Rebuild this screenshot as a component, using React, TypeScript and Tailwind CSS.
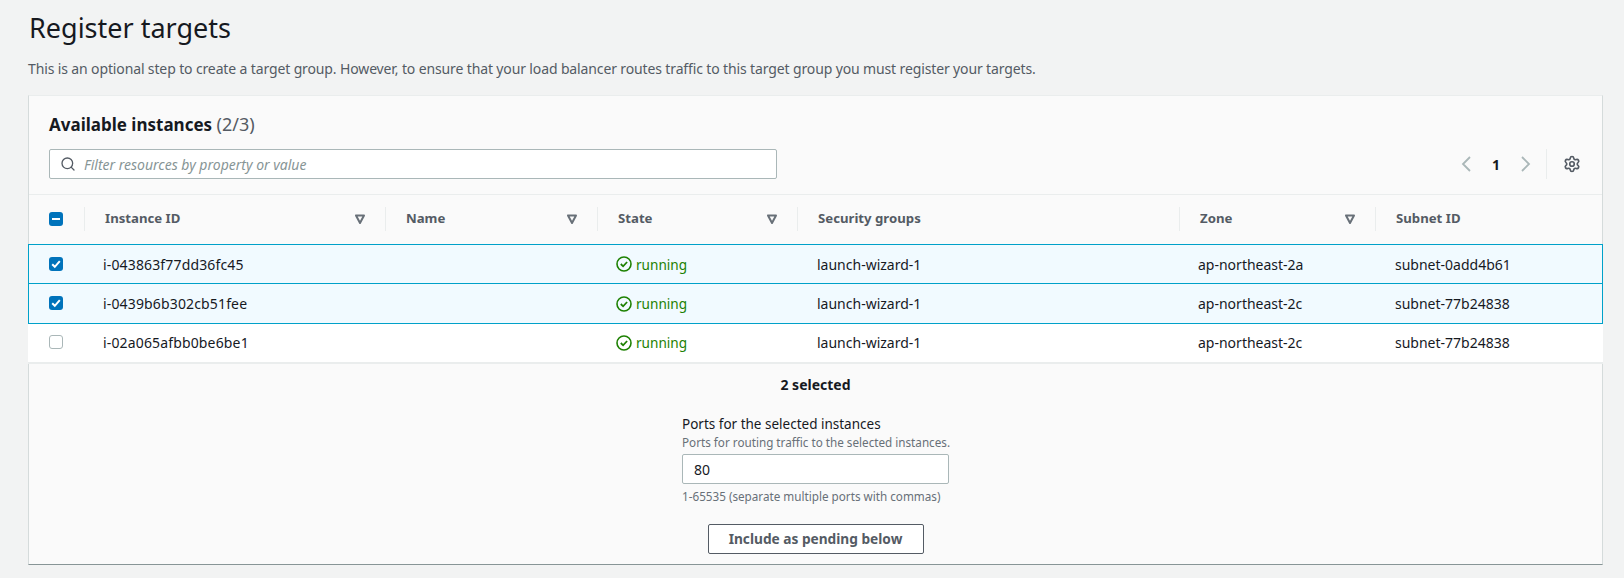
import React from 'react';
import { Search, Settings } from 'lucide-react';

const columnGrid = 'grid grid-cols-[55px_301px_212px_200px_382px_196px_1fr]';

const rows = [
  { id: 'i-043863f77dd36fc45', zone: 'ap-northeast-2a', subnet: 'subnet-0add4b61', selected: true, height: 'h-[40px]' },
  { id: 'i-0439b6b302cb51fee', zone: 'ap-northeast-2c', subnet: 'subnet-77b24838', selected: true, height: 'h-[41px]' },
  { id: 'i-02a065afbb0be6be1', zone: 'ap-northeast-2c', subnet: 'subnet-77b24838', selected: false, height: 'h-[41px]' },
];

const SortCaret = () => (
  <svg width="12" height="12" viewBox="0 0 12 12" className="shrink-0">
    <path d="M2 2.5h8L6 10z" fill="none" stroke="#687078" strokeWidth="2" strokeLinejoin="round" />
  </svg>
);

const HeaderCell: React.FC<{ title: string; sortable?: boolean }> = ({ title, sortable }) => (
  <div className="h-[24px] flex items-center justify-between pl-[20px] pr-[19px] border-l border-[#eaeded]">
    <span className="text-[13.2px] font-bold text-[#545b64]">{title}</span>
    {sortable && <SortCaret />}
  </div>
);

const Checkbox: React.FC<{ state: 'on' | 'off' | 'mixed' }> = ({ state }) => {
  if (state === 'off') {
    return <div className="w-[14px] h-[14px] rounded-[3px] border border-[#aab7b8] bg-white" />;
  }
  return (
    <div className="w-[14px] h-[14px] rounded-[3px] bg-[#0073bb] flex items-center justify-center">
      <svg width="14" height="14" viewBox="0 0 14 14">
        {state === 'on' ? (
          <path d="M3.2 7.2l2.6 2.6 5-5.6" fill="none" stroke="#fff" strokeWidth="2" />
        ) : (
          <path d="M3 7h8" fill="none" stroke="#fff" strokeWidth="2" />
        )}
      </svg>
    </div>
  );
};

const RunningIcon = () => (
  <svg width="16" height="16" viewBox="0 0 16 16" className="shrink-0">
    <circle cx="8" cy="8" r="7" fill="none" stroke="#1d8102" strokeWidth="1.6" />
    <path d="M4.8 8l2.3 2.3 4-4.3" fill="none" stroke="#1d8102" strokeWidth="1.8" />
  </svg>
);

const PageArrow: React.FC<{ points: string }> = ({ points }) => (
  <svg width="12" height="18" viewBox="0 0 12 18" className="shrink-0">
    <polyline points={points} fill="none" stroke="#aab7b8" strokeWidth="1.8" />
  </svg>
);

export default function App() {
  return (
    <div className="min-h-[578px] bg-[#f2f3f3] pl-[28px] pr-[21px] text-[14px] text-[#16191f] font-['Noto_Sans',sans-serif]">
      <h1 className="pt-[8px] pl-px text-[27px] leading-[40px] font-normal">Register targets</h1>
      <p className="mt-[11px] leading-[20px] tracking-[-0.13px] text-[#545b64]">
        This is an optional step to create a target group. However, to ensure that your load balancer routes traffic to this target group you must register your targets.
      </p>

      <div className="mt-[16px] bg-[#fafafa] border-l border-r border-b border-t border-t-[#eaeded] border-x-[#d5dbdb] border-b-[#879596]">
        <div className="h-[99px] border-b border-[#eaeded] px-[20px] pt-[17px] flex flex-col">
          <h2 className="h-[24px] text-[17px] leading-[24px] font-bold">
            Available instances <span className="text-[18px] leading-none font-normal text-[#545b64]">(2/3)</span>
          </h2>
          <div className="mt-[12px] flex items-center">
            <div className="w-[728px] h-[30px] bg-white border border-[#aab7b8] rounded-[2px] flex items-center pl-[10px]">
              <Search size={16} color="#545b64" strokeWidth={2} />
              <span className="ml-[8px] italic text-[#879596]">Filter resources by property or value</span>
            </div>
            <div className="ml-auto flex items-center">
              <PageArrow points="10,2 3,9 10,16" />
              <span className="mx-[20px] font-bold w-[8px] text-center">1</span>
              <PageArrow points="2,2 9,9 2,16" />
              <div className="ml-[14px] h-[30px] border-l border-[#eaeded] pl-[16px] pr-[1px] flex items-center">
                <Settings size={18} color="#545b64" strokeWidth={2.2} />
              </div>
            </div>
          </div>
        </div>

        <div className={`${columnGrid} h-[49px] pb-[1px] items-center`}>
          <div className="pl-[20px] flex items-center">
            <Checkbox state="mixed" />
          </div>
          <HeaderCell title="Instance ID" sortable />
          <HeaderCell title="Name" sortable />
          <HeaderCell title="State" sortable />
          <HeaderCell title="Security groups" />
          <HeaderCell title="Zone" sortable />
          <HeaderCell title="Subnet ID" />
        </div>

        {rows.map((row, index) => (
          <div
            key={row.id}
            className={`${columnGrid} ${row.height} items-center -mx-px ${
              row.selected ? 'bg-[#f1faff] border border-[#00a1c9] -mb-px' : 'bg-white border-b-2 border-[#eaeded] px-px'
            } ${index === 1 ? 'relative' : ''}`}
          >
            <div className="pl-[20px] pb-[1px]">
              <Checkbox state={row.selected ? 'on' : 'off'} />
            </div>
            <div className="pl-[19px] tracking-[0.15px]">{row.id}</div>
            <div />
            <div className="pl-[19px] flex items-center gap-[4px] text-[13.6px] leading-[21px] text-[#1d8102]">
              <RunningIcon />
              running
            </div>
            <div className="pl-[20px]">launch-wizard-1</div>
            <div className="pl-[19px]">{row.zone}</div>
            <div className="pl-[20px]">{row.subnet}</div>
          </div>
        ))}

        <div className="h-[200px] flex flex-col items-center pt-[11px]">
          <div className="font-bold leading-[20px]">2 selected</div>
          <div className="w-[267px] mt-[19px]">
            <div className="text-[13.5px] leading-[20px]">Ports for the selected instances</div>
            <div className="text-[11.7px] leading-[16px] whitespace-nowrap text-[#687078]">Ports for routing traffic to the selected instances.</div>
            <div className="mt-[4px] h-[30px] bg-white border border-[#aab7b8] rounded-[2px] flex items-center pl-[11px]">80</div>
            <div className="mt-[4px] text-[11.7px] leading-[16px] whitespace-nowrap text-[#687078]">1-65535 (separate multiple ports with commas)</div>
          </div>
          <button className="mt-[20px] w-[216px] h-[30px] bg-white border border-[#545b64] rounded-[2px] text-[13.7px] font-bold text-[#545b64]">
            Include as pending below
          </button>
        </div>
      </div>
    </div>
  );
}
